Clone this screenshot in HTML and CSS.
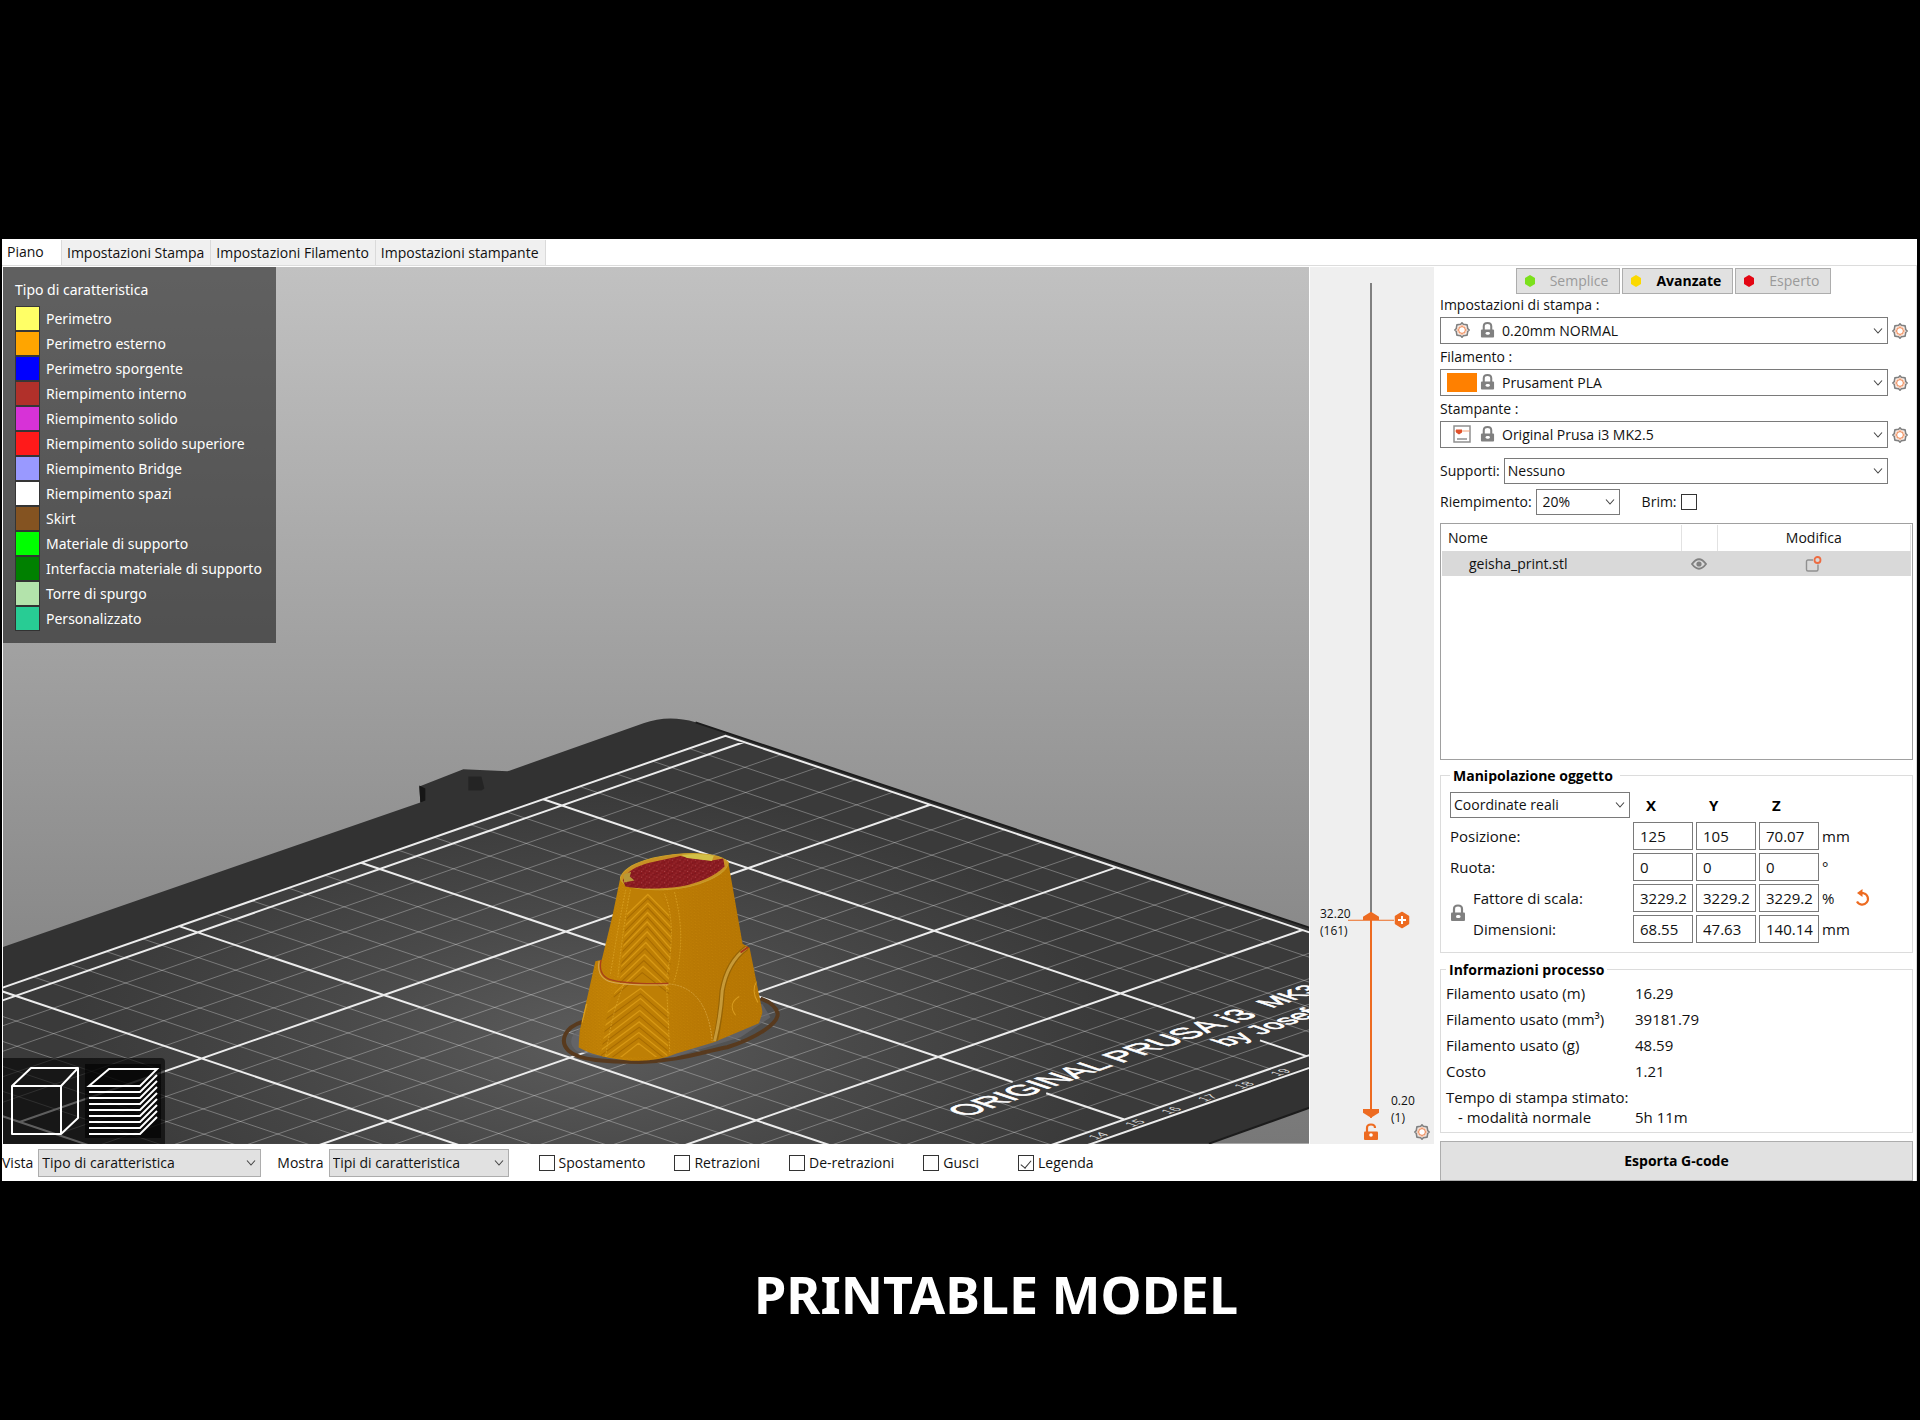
FILE: index.html
```html
<!DOCTYPE html>
<html lang="it">
<head>
<meta charset="utf-8">
<meta name="viewport" content="width=device-width, initial-scale=1">
<title>Printable model</title>
<link rel="stylesheet" href="styles.css">
</head>
<body>
<svg class="defs" aria-hidden="true">
  <symbol id="gear" viewBox="0 0 18 18">
    <path d="M9 1.800 10.300 3.300 14.100 3.900 14.700 7.700 16.200 9 14.700 10.300 14.100 14.100 10.300 14.700 9 16.200 7.700 14.700 3.900 14.100 3.300 10.300 1.800 9 3.300 7.700 3.900 3.900 7.700 3.300Z" fill="none" stroke="#808080" stroke-width="1.600" stroke-linejoin="round"/>
    <circle cx="9" cy="9" r="4.600" fill="none" stroke="#f8c8b0" stroke-width="1"/>
    <circle cx="9" cy="9" r="3.400" fill="#fff" stroke="#ed7b41" stroke-width="1"/>
  </symbol>
  <symbol id="lock" viewBox="0 0 16 18">
    <path d="M4 9V5Q4 1.500 8 1.500T12 5V9" fill="none" stroke="#808080" stroke-width="2.200"/>
    <rect x="1" y="8.500" width="14" height="8.500" rx="1" fill="#808080"/>
    <rect x="6" y="11" width="4.500" height="3" rx="1.500" fill="#fff"/>
  </symbol>
  <symbol id="chev" viewBox="0 0 10 8"><path d="M1 1.500 5 6 9 1.500" fill="none" stroke="#444" stroke-width="1.100"/></symbol>
</svg>

<main class="app">
  <nav class="tabs">
    <button class="tab tab-on">Piano</button>
    <button class="tab">Impostazioni Stampa</button>
    <button class="tab">Impostazioni Filamento</button>
    <button class="tab">Impostazioni stampante</button>
  </nav>
  <div class="work">
    <div class="left">
      <div class="top">
        <section class="view">
          <svg class="scene" viewBox="3 267 1305 876" preserveAspectRatio="xMidYMax slice" aria-label="Anteprima">
            <defs>
              <linearGradient id="sky" x1="0" y1="0" x2="0" y2="1"><stop offset="0" stop-color="#c1c1c1"/><stop offset="1" stop-color="#787878"/></linearGradient>
              <radialGradient id="light" gradientUnits="userSpaceOnUse" cx="0" cy="0" r="1" gradientTransform="translate(590 1040) scale(520 250)"><stop offset="0" stop-color="#5c5c5c"/><stop offset=".5" stop-color="#494949"/><stop offset="1" stop-color="#3a3a3a"/></radialGradient>
              <linearGradient id="body" x1="0" y1="0" x2="1" y2="0"><stop offset="0" stop-color="#b87804"/><stop offset=".3" stop-color="#c48406"/><stop offset=".6" stop-color="#bb7a04"/><stop offset="1" stop-color="#b57503"/></linearGradient>
              <clipPath id="strip"><path d="M272 172Q250 300 238 456L205 520 180 680 380 680Q392 560 384 456 400 330 385 250 370 200 345 175Z"/></clipPath>
              <clipPath id="hull"><path d="M240 140 215 260 184 388 165 392 118 600 114 650Q160 678 250 688T410 668L520 635 655 578 666 545 627 352 606 340 563 95Z"/></clipPath>
              <pattern id="layers" width="11" height="9" patternUnits="userSpaceOnUse" patternTransform="rotate(-4)"><path d="M0 2H5M6 6.500H10" stroke="#9f6700" stroke-width="1.500"/><path d="M3 8H5" stroke="#e0a21a" stroke-width="1"/></pattern>
              <pattern id="speck" width="23" height="17" patternUnits="userSpaceOnUse"><path d="M3 4h3M14 9h2M8 14h2M19 2h2" stroke="#d98080" stroke-width="1.500"/><path d="M10 3h3M2 10h3M18 13h3" stroke="#601018" stroke-width="2"/></pattern>
            </defs>
            <rect x="3" y="267" width="1305" height="876" fill="url(#sky)"/>
            <path d="M-10 951 420 802 419 786 463 769 507 771 643 723Q668 714 695 722L1320 931V1103L1208 1143H-10Z" fill="#323232"/>
            <path d="M419 785 425 788V800L420 802Z" fill="#161616"/>
            <path d="M468 776H481L484 788 481 790H468Z" fill="#242424"/>
            <path d="M725 735 1320 936V1061L1086 1143H-10V990Z" fill="url(#light)"/>
            <!-- bed plane: 20 units = 1 cm -->
            <g transform="matrix(1.82 -.634 1.86 .626 -166.500 1058.700)" fill="none">
              <path class="minor" d="M20-10V400M40-10V400M60-10V400M80-10V400M120-10V400M140-10V400M160-10V400M180-10V400M220-10V400M240-10V400M260-10V400M280-10V400M320-10V400M340-10V400M360-10V400M380-10V400M420-10V400M440-10V400M460-10V400M480-10V400M0 20H500M0 40H500M0 60H500M0 80H500M0 120H500M0 140H500M0 160H500M0 180H500M0 220H500M0 240H500M0 260H500M0 280H500M0 320H500M0 340H500M0 360H500M0 380H500"/>
              <path class="major" d="M0-10H500V410H0ZM100-10V400M200-10V400M300-10V340M300 358V400M400-10V340M400 375V400M0 0H500M0 100H500M0 200H500M0 300H500M0 400H500"/>
              <g class="engrave">
                <text x="259" y="355" font-size="17">ORIGINAL PRUSA i3</text>
                <text x="429" y="353" font-size="14">MK3</text>
                <text x="386" y="371" font-size="14">by Josef</text>
              </g>
              <g class="ruler">
                <text x="280" y="408">14</text><text x="300" y="408">15</text><text x="320" y="408">16</text><text x="340" y="408">17</text><text x="360" y="408">18</text><text x="380" y="408">19</text>
              </g>
            </g>
            <path d="M1208 1143 1320 1103" stroke="#1c1c1c" stroke-width="2"/>
            <path d="M695 722 1320 931" stroke="#1c1c1c" stroke-width="2"/>
            <svg x="540" y="830" width="260" height="250" viewBox="0 0 780 750">
              <path d="M125 574C75 590 55 630 84 660 115 690 200 694 300 694 420 690 480 665 560 650 640 625 716 580 711 548 705 525 685 512 660 504" fill="none" stroke="#583a1e" stroke-width="12"/>
              <path d="M125 590C90 610 80 640 110 662 200 690 300 688 400 680L600 620 690 560 665 520Z" fill="#68686c" opacity=".7"/>
              <g clip-path="url(#hull)">
                <rect width="780" height="750" fill="url(#body)"/>
                <rect width="780" height="750" fill="url(#layers)" opacity=".5"/>
                <g clip-path="url(#strip)">
                  <rect x="170" y="170" width="240" height="520" fill="#be7f05"/>
                  <g fill="none" stroke="#dfa01a" stroke-width="4" opacity=".75">
                    <path d="M240 270 322 192 400 270M240 300 322 218 400 300M240 330 321 246 400 330M230 365 320 274 400 365M230 395 320 304 400 395M220 430 316 336 400 430M220 460 312 372 400 460M220 490 308 408 400 490M180 560 300 474 400 560M180 595 300 504 400 595M180 630 298 540 400 630M180 660 296 574 400 660M180 690 295 606 400 690M190 720 294 638 400 720"/>
                  </g>
                  <g fill="none" stroke="#9c6300" stroke-width="3" opacity=".7">
                    <path d="M240 283 322 204 400 283M240 315 322 232 400 315M240 348 321 260 400 348M230 380 320 288 400 380M230 412 318 320 400 412M220 445 314 354 400 445M220 475 310 390 400 475M220 500 305 426 400 500M180 578 300 490 400 578M180 612 298 522 400 612M180 645 297 557 400 645M180 676 296 590 400 676M180 706 295 622 400 706"/>
                  </g>
                </g>
                <g fill="none" stroke="#dba328" stroke-width="2.500" stroke-dasharray="5 4">
                  <path d="M270 178Q250 270 232 440M256 178Q236 270 210 430M372 190Q410 280 378 440M250 462Q215 540 195 680M378 462 388 670M402 185Q440 330 400 455"/>
                </g>
                <path d="M182 388Q172 430 205 446 250 462 384 459" fill="none" stroke="#a8401a" stroke-width="4"/>
                <path d="M176 392Q168 438 205 452 250 466 384 463" fill="none" stroke="#d8a858" stroke-width="3"/>
                <path d="M384 460Q500 470 515 632" fill="none" stroke="#e0b050" stroke-width="2" stroke-dasharray="6 3"/>
                <path d="M618 352Q560 395 545 480 540 560 524 632" fill="none" stroke="#976405" stroke-width="16"/>
                <path d="M618 352Q560 395 545 480 540 560 522 632" fill="none" stroke="#c79a38" stroke-width="9"/>
                <path d="M625 348 600 366" stroke="#a83618" stroke-width="6"/>
                <path d="M596 498Q560 520 585 554M650 450Q630 480 652 516" fill="none" stroke="#d89c20" stroke-width="3"/>
                <path d="M138 520 124 576" stroke="#dba020" stroke-width="5"/>
              </g>
              <path d="M240 140C260 95 350 75 430 70 500 66 548 78 563 96 560 130 480 172 380 177 300 180 240 172 240 140Z" fill="#c99024" stroke="#c9a02a" stroke-width="3"/>
              <path d="M247 150Q262 112 330 96L420 77 440 82 515 90 548 84 552 108Q510 150 420 168 320 180 255 168Z" fill="#8a1a20"/>
              <path d="M247 150Q262 112 330 96L420 77 440 82 515 90 548 84 552 108Q510 150 420 168 320 180 255 168Z" fill="url(#speck)"/>
              <path d="M422 74Q480 66 520 76L514 92 440 83Z" fill="#d2c048"/>
              <path d="M250 132 272 124 268 138 282 150 250 156Z" fill="#b89838"/>
            </svg>
          </svg>
          <div class="legend">
            <h2>Tipo di caratteristica</h2>
            <ul>
              <li><i class="c1"></i>Perimetro</li>
              <li><i class="c2"></i>Perimetro esterno</li>
              <li><i class="c3"></i>Perimetro sporgente</li>
              <li><i class="c4"></i>Riempimento interno</li>
              <li><i class="c5"></i>Riempimento solido</li>
              <li><i class="c6"></i>Riempimento solido superiore</li>
              <li><i class="c7"></i>Riempimento Bridge</li>
              <li><i class="c8"></i>Riempimento spazi</li>
              <li><i class="c9"></i>Skirt</li>
              <li><i class="c10"></i>Materiale di supporto</li>
              <li><i class="c11"></i>Interfaccia materiale di supporto</li>
              <li><i class="c12"></i>Torre di spurgo</li>
              <li><i class="c13"></i>Personalizzato</li>
            </ul>
          </div>
          <div class="modes">
            <button aria-label="Vista 3D"><svg width="76" height="74" viewBox="0 0 76 74"><path d="M5 22H54V70H5ZM5 22 24 4H71L54 22M71 4V54L54 70" fill="none" stroke="#fff" stroke-width="2" stroke-linejoin="round"/></svg></button>
            <button class="mode-on" aria-label="Anteprima strati"><svg width="76" height="74" viewBox="0 0 76 74"><path d="M4 22H55L72 5H24ZM4 28H55L72 11M4 34H55L72 17M4 40H55L72 23M4 46H55L72 29M4 52H55L72 35M4 58H55L72 41M4 64H55L72 47M4 70H55L72 53" fill="none" stroke="#fff" stroke-width="2"/></svg></button>
          </div>
        </section>
        <aside class="slider">
          <div class="track">
            <input class="range upper" type="range" min="1" max="672" value="161" aria-label="Strato superiore">
            <input class="range lower" type="range" min="1" max="672" value="1" aria-label="Strato inferiore">
            <p class="mark hi">32.20<br>(161)</p>
            <p class="mark lo">0.20<br>(1)</p>
            <button class="plus" aria-label="Aggiungi"><svg width="16" height="18" viewBox="0 0 16 18"><path d="M8 1.500 14.500 5.500V12.500L8 16.500 1.500 12.500V5.500Z" fill="#ed6b21" stroke="#ed6b21" stroke-width="1.500" stroke-linejoin="round"/><path d="M8 5V13M4 9H12" stroke="#fff" stroke-width="2"/></svg></button>
          </div>
          <div class="slider-foot">
            <button class="unlock" aria-label="Sblocca"><svg width="16" height="18" viewBox="0 0 16 18"><path d="M4 9V5Q4 1.500 8 1.500T12 5" fill="none" stroke="#ed6b21" stroke-width="2.200"/><rect x="1" y="8.500" width="14" height="8.500" rx="1" fill="#ed6b21"/><circle cx="8" cy="12" r="1.800" fill="#fff"/></svg></button>
            <button class="foot-gear" aria-label="Opzioni"><svg width="18" height="18"><use href="#gear"/></svg></button>
          </div>
        </aside>
      </div>
      <div class="bar">
        <label for="vista">Vista</label>
        <span class="combo grey w-vista"><select id="vista"><option>Tipo di caratteristica</option></select><svg class="chev"><use href="#chev"/></svg></span>
        <label class="mostra" for="mostra">Mostra</label>
        <span class="combo grey w-mostra"><select id="mostra"><option>Tipi di caratteristica</option></select><svg class="chev"><use href="#chev"/></svg></span>
        <div class="checks">
          <label><input type="checkbox">Spostamento</label>
          <label><input type="checkbox">Retrazioni</label>
          <label><input type="checkbox">De-retrazioni</label>
          <label class="wide"><input type="checkbox">Gusci</label>
          <label><input type="checkbox" checked>Legenda</label>
        </div>
      </div>
    </div>

    <aside class="panel">
      <div class="levels">
        <button class="level"><svg width="12" height="12" viewBox="0 0 12 12"><path d="M6 0 11 3V9L6 12 1 9V3Z" fill="#7be01c"/></svg>Semplice</button>
        <button class="level level-on"><svg width="12" height="12" viewBox="0 0 12 12"><path d="M6 0 11 3V9L6 12 1 9V3Z" fill="#fbd900"/></svg>Avanzate</button>
        <button class="level"><svg width="12" height="12" viewBox="0 0 12 12"><path d="M6 0 11 3V9L6 12 1 9V3Z" fill="#e30613"/></svg>Esperto</button>
      </div>
      <label class="cap" for="p1">Impostazioni di stampa :</label>
      <div class="preset">
        <span class="combo icons"><select id="p1"><option>0.20mm NORMAL</option></select>
          <span class="lead"><svg width="18" height="18"><use href="#gear"/></svg></span><svg class="lk"><use href="#lock"/></svg><svg class="chev"><use href="#chev"/></svg></span>
        <button aria-label="Modifica stampa"><svg width="18" height="18"><use href="#gear"/></svg></button>
      </div>
      <label class="cap" for="p2">Filamento :</label>
      <div class="preset">
        <span class="combo icons"><select id="p2"><option>Prusament PLA</option></select>
          <span class="lead swatch"></span><svg class="lk"><use href="#lock"/></svg><svg class="chev"><use href="#chev"/></svg></span>
        <button aria-label="Modifica filamento"><svg width="18" height="18"><use href="#gear"/></svg></button>
      </div>
      <label class="cap" for="p3">Stampante :</label>
      <div class="preset">
        <span class="combo icons"><select id="p3"><option>Original Prusa i3 MK2.5</option></select>
          <span class="lead"><svg width="18" height="18" viewBox="0 0 18 18"><path d="M1 1H17V17H1ZM4 14H14" fill="none" stroke="#909090" stroke-width="1.500"/><path d="M1 6H17" stroke="#f0a078" stroke-width="1"/><path d="M3 4.500H9V7.500L6 9.500 3 7.500Z" fill="#e0502a"/></svg></span><svg class="lk"><use href="#lock"/></svg><svg class="chev"><use href="#chev"/></svg></span>
        <button aria-label="Modifica stampante"><svg width="18" height="18"><use href="#gear"/></svg></button>
      </div>
      <div class="line supp">
        <label for="sup">Supporti:</label>
        <span class="combo grow"><select id="sup"><option>Nessuno</option></select><svg class="chev"><use href="#chev"/></svg></span>
      </div>
      <div class="line">
        <label for="fill">Riempimento:</label>
        <span class="combo w-fill"><select id="fill"><option>20%</option></select><svg class="chev"><use href="#chev"/></svg></span>
        <label class="brim">Brim:<input type="checkbox"></label>
      </div>
      <div class="list">
        <table>
          <thead><tr><th class="name">Nome</th><th class="eye"></th><th class="mod">Modifica</th></tr></thead>
          <tbody><tr><td class="file">geisha_print.stl</td>
            <td><svg width="16" height="12" viewBox="0 0 16 12"><path d="M1 6Q8-3.500 15 6 8 15.500 1 6Z" fill="none" stroke="#808080" stroke-width="1.800"/><circle cx="8" cy="6" r="2.600" fill="#808080"/></svg></td>
            <td><svg width="17" height="16" viewBox="0 0 17 16"><path d="M8 4H3Q1.500 4 1.500 5.500V13.500Q1.500 15 3 15H11.500Q13 15 13 13.500V8.500" fill="none" stroke="#909090" stroke-width="1.400"/><circle cx="12.500" cy="4" r="3" fill="none" stroke="#ed6b41" stroke-width="1.800"/></svg></td></tr></tbody>
        </table>
      </div>

      <fieldset class="manip">
        <legend>Manipolazione oggetto</legend>
        <div class="grid">
          <span class="combo span2"><select aria-label="Coordinate"><option>Coordinate reali</option></select><svg class="chev"><use href="#chev"/></svg></span>
          <b>X</b><b>Y</b><b>Z</b><span></span><span></span>
          <span class="span2">Posizione:</span>
          <input aria-label="Posizione X" value="125"><input aria-label="Posizione Y" value="105"><input aria-label="Posizione Z" value="70.07"><span class="unit">mm</span><span></span>
          <span class="span2">Ruota:</span>
          <input aria-label="Ruota X" value="0"><input aria-label="Ruota Y" value="0"><input aria-label="Ruota Z" value="0"><span class="unit">°</span><span></span>
          <button class="ratio" aria-label="Blocca proporzioni"><svg width="16" height="18"><use href="#lock"/></svg></button>
          <span>Fattore di scala:</span>
          <input aria-label="Scala X" value="3229.2"><input aria-label="Scala Y" value="3229.2"><input aria-label="Scala Z" value="3229.2"><span class="unit">%</span>
          <button class="reset" aria-label="Ripristina"><svg width="16" height="18" viewBox="0 0 16 18"><path d="M6 4.200H8.500A5.800 5.800 0 1 1 2 12.500" fill="none" stroke="#ed6b21" stroke-width="2.200"/><path d="M7.500 0V8L2 4Z" fill="#ed6b21"/></svg></button>
          <span>Dimensioni:</span>
          <input aria-label="Dimensione X" value="68.55"><input aria-label="Dimensione Y" value="47.63"><input aria-label="Dimensione Z" value="140.14"><span class="unit">mm</span><span></span>
        </div>
      </fieldset>

      <fieldset class="info">
        <legend>Informazioni processo</legend>
        <dl>
          <dt>Filamento usato (m)</dt><dd>16.29</dd>
          <dt>Filamento usato (mm³)</dt><dd>39181.79</dd>
          <dt>Filamento usato (g)</dt><dd>48.59</dd>
          <dt>Costo</dt><dd>1.21</dd>
          <dt class="tight">Tempo di stampa stimato:</dt><dd class="tight"></dd>
          <dt class="tight sub">- modalità normale</dt><dd class="tight">5h 11m</dd>
        </dl>
      </fieldset>
      <button class="export">Esporta G-code</button>
    </aside>
  </div>
</main>
<h1 class="caption">PRINTABLE MODEL</h1>
</body>
</html>
```

FILE: styles.css
```css
* { box-sizing: border-box; }
body { margin: 0; background: #000; color: #111; font: 14px/20px "Open Sans", "Noto Sans", sans-serif; padding: 239px 3px 0 2px; }
button, input, select { font: inherit; color: inherit; margin: 0; border-radius: 0; }
button { padding: 0; border: 0; background: none; }
svg { display: block; }
.defs { position: absolute; width: 0; height: 0; }
h1, h2, p, ul, dl, dd { margin: 0; padding: 0; }

.app { background: #fff; }
.tabs { display: flex; height: 27px; padding-top: 1px; border-bottom: 1px solid #dcdcdc; }
.tab { height: 25px; padding: 1px 6px 0 5px; background: #f0f0f0; border-right: 1px solid #dadada; white-space: nowrap; }
.tab-on { width: 60px; padding: 0 0 2px 5px; text-align: left; background: #fff; }
.work { display: flex; }
.left { flex: 1; min-width: 0; display: flex; flex-direction: column; }
.top { display: flex; flex: 1; padding: 1px 0 0 1px; }

.view { flex: 1; min-width: 0; position: relative; overflow: hidden; }
.scene { width: 100%; height: 100%; }
.minor { stroke: #fff; stroke-opacity: .3; stroke-width: 1; vector-effect: non-scaling-stroke; }
.major { stroke: #ececec; stroke-width: 2; vector-effect: non-scaling-stroke; }
.engrave { fill: #fff; stroke: #fff; stroke-width: .5; font-family: "Liberation Sans", sans-serif; }
.ruler { fill: #d8d8d8; font: 7px "Liberation Sans", sans-serif; text-anchor: middle; }
.legend { position: absolute; left: 0; top: 0; width: 273px; height: 376px; padding: 12px 12px; background: rgba(0, 0, 0, .5); color: #fff; font: 14px/25px "Noto Sans", sans-serif; }
.legend h2 { font: inherit; line-height: 22px; margin-bottom: 5px; }
.legend ul { list-style: none; }
.legend li { display: flex; align-items: center; height: 25px; gap: 6px; white-space: nowrap; }
.legend i { width: 25px; height: 25px; border: 1px solid rgba(30, 30, 30, .6); background-clip: padding-box; }
.c1 { background-color: #ffff66; } .c2 { background-color: #ffa500; } .c3 { background-color: #0000ff; }
.c4 { background-color: #b1302a; } .c5 { background-color: #d732d7; } .c6 { background-color: #ff1a1a; }
.c7 { background-color: #9999ff; } .c8 { background-color: #ffffff; } .c9 { background-color: #845321; }
.c10 { background-color: #00ff00; } .c11 { background-color: #008000; } .c12 { background-color: #b3e3ab; } .c13 { background-color: #28cc94; }
.modes { position: absolute; left: 0; bottom: 0; display: flex; gap: 2px; padding: 6px 4px; background: rgba(0, 0, 0, .6); border-radius: 0 4px 0 0; }
.mode-on { background: rgba(0, 0, 0, .6); }

.slider { flex: 0 0 125px; background: #efefef; display: flex; flex-direction: column; border-left: 1px solid #fff; }
.track { flex: 1; position: relative; margin: 16px 2px 0 0; display: grid; justify-items: center; }
.range { grid-area: 1 / 1; width: 48px; height: 100%; appearance: none; writing-mode: vertical-lr; direction: rtl; background: none; pointer-events: none; }
.upper { background: linear-gradient(#808080 76%, #ed6b21 76%) center / 2px 100% no-repeat; }
.range::-webkit-slider-thumb { appearance: none; pointer-events: auto; width: 46px; height: 9px; background: #ed6b21; clip-path: polygon(0 8px, 15px 8px, 15px 5px, 23px 0, 31px 5px, 31px 8px, 46px 8px, 46px 9px, 0 9px); }
.lower::-webkit-slider-thumb { clip-path: polygon(15px 0, 31px 0, 31px 4px, 23px 9px, 15px 4px); }
.mark { position: absolute; font-size: 12px; line-height: 17px; }
.hi { left: 10px; bottom: 179px; }
.lo { left: 81px; bottom: -8px; }
.plus { position: absolute; left: 84px; bottom: 189px; }
.slider-foot { display: grid; grid-template-columns: 1fr 16px 1fr; align-items: center; height: 26px; padding: 3px 3px 0 0; }
.unlock { grid-column: 2; }
.foot-gear { justify-self: end; }

.bar { display: flex; align-items: center; height: 37px; padding-top: 1px; white-space: nowrap; }
.mostra { margin-left: 16px; }
.bar .combo { margin-left: 5px; }
.combo { position: relative; display: block; height: 26px; }
.combo select { width: 100%; height: 100%; appearance: none; border: 1px solid #7a7a7a; background: #fff; padding: 0 20px 0 3px; color: #111; }
.combo.grey { height: 28px; }
.combo.grey select { background: #e1e1e1; border-color: #adadad; }
.chev { position: absolute; right: 5px; top: 50%; width: 10px; height: 8px; margin-top: -4px; pointer-events: none; }
.w-vista { width: 223px; }
.w-mostra { width: 180px; }
.checks { display: flex; gap: 29px; margin-left: 30px; }
.checks label { display: flex; align-items: center; gap: 4px; }
.checks .wide { margin-right: 10px; }
input[type=checkbox] { appearance: none; width: 16px; height: 16px; border: 1px solid #333; background: #fff; display: grid; place-items: center; }
input[type=checkbox]:checked::after { content: ""; width: 5px; height: 9px; border: solid #333; border-width: 0 1px 1px 0; transform: rotate(40deg); }

.panel { flex: 0 0 483px; display: flex; flex-direction: column; padding: 2px 3px 0 6px; border-right: 1px solid #dcdcdc; }
.levels { display: flex; justify-content: center; gap: 2px; height: 26px; padding-right: 6px; }
.level { display: flex; align-items: center; gap: 14px; padding: 0 11px 0 7px; border: 1px solid #adadad; background: #e1e1e1; color: #9a9a9a; }
.level-on { font-weight: 700; color: #000; }
.cap { line-height: 20px; margin-top: 1px; padding-bottom: 2px; }
.preset { display: flex; align-items: center; gap: 3px; height: 27px; margin-bottom: 2px; padding-right: 2px; }
.preset .combo { flex: 1; height: 27px; }
.preset > button { width: 20px; }
.icons select { padding-left: 61px; }
.lead { position: absolute; left: 13px; top: 4px; }
.swatch { left: 7px; width: 30px; height: 19px; background: #ff8000; }
.lk { position: absolute; left: 40px; top: 4px; width: 15px; height: 18px; }
.line { display: flex; align-items: center; gap: 4px; height: 26px; margin-bottom: 5px; padding-right: 25px; }
.supp { margin-top: 8px; }
.grow { flex: 1; }
.w-fill { width: 84px; }
.w-fill select { padding-left: 6px; }
.brim { display: flex; align-items: center; gap: 4px; margin-left: 18px; }
.list { flex: 1; min-height: 230px; margin-top: 3px; border: 1px solid #a0a0a0; padding: 1px; }
table { width: 100%; border-collapse: collapse; table-layout: fixed; }
th { font-weight: 400; height: 26px; padding: 0; border-right: 1px solid #e2e2e2; }
.name { width: 239px; text-align: left; padding-left: 6px; }
.eye { width: 36px; }
td { height: 25px; padding: 0; background: #d9d9d9; }
td svg { margin: 0 auto; }
.file { padding-left: 27px; }

fieldset { margin: 6px 0 0; border: 1px solid #dcdcdc; min-width: 0; font-size: 15px; }
legend { font-weight: 700; font-size: 14px; color: #000; line-height: 20px; }
.manip { padding: 5px 0 9px 9px; }
.manip legend { padding: 0 7px 0 3px; }
.grid { display: grid; grid-template-columns: 20px 157px 60px 60px 60px 30px 24px; column-gap: 3px; row-gap: 3px; align-items: center; grid-auto-rows: 28px; }
.span2 { grid-column: span 2; }
.grid select { font-size: 14px; }
.grid b { padding-left: 13px; color: #000; }
.grid input { width: 60px; height: 28px; border: 1px solid #7a7a7a; padding: 0 0 0 6px; background: #fff; }
.ratio { grid-row: 4 / 6; }
.reset { justify-self: start; }
.info { padding: 0 0 8px 5px; margin-top: 7px; }
.info legend { padding: 0 3px 0 3px; }
dl { display: grid; grid-template-columns: 189px 1fr; }
dt, dd { line-height: 26px; height: 26px; }
.tight { line-height: 20px; height: 20px; padding-top: 3px; }
.tight.sub { padding-left: 12px; }
.export { flex: none; height: 40px; margin-top: 8px; border: 1px solid #adadad; background: #e1e1e1; font-weight: 700; color: #000; }

.caption { margin: 78px 0 0 73px; text-align: center; color: #fff; font: 700 52px/70px "Noto Sans", sans-serif; }
```
